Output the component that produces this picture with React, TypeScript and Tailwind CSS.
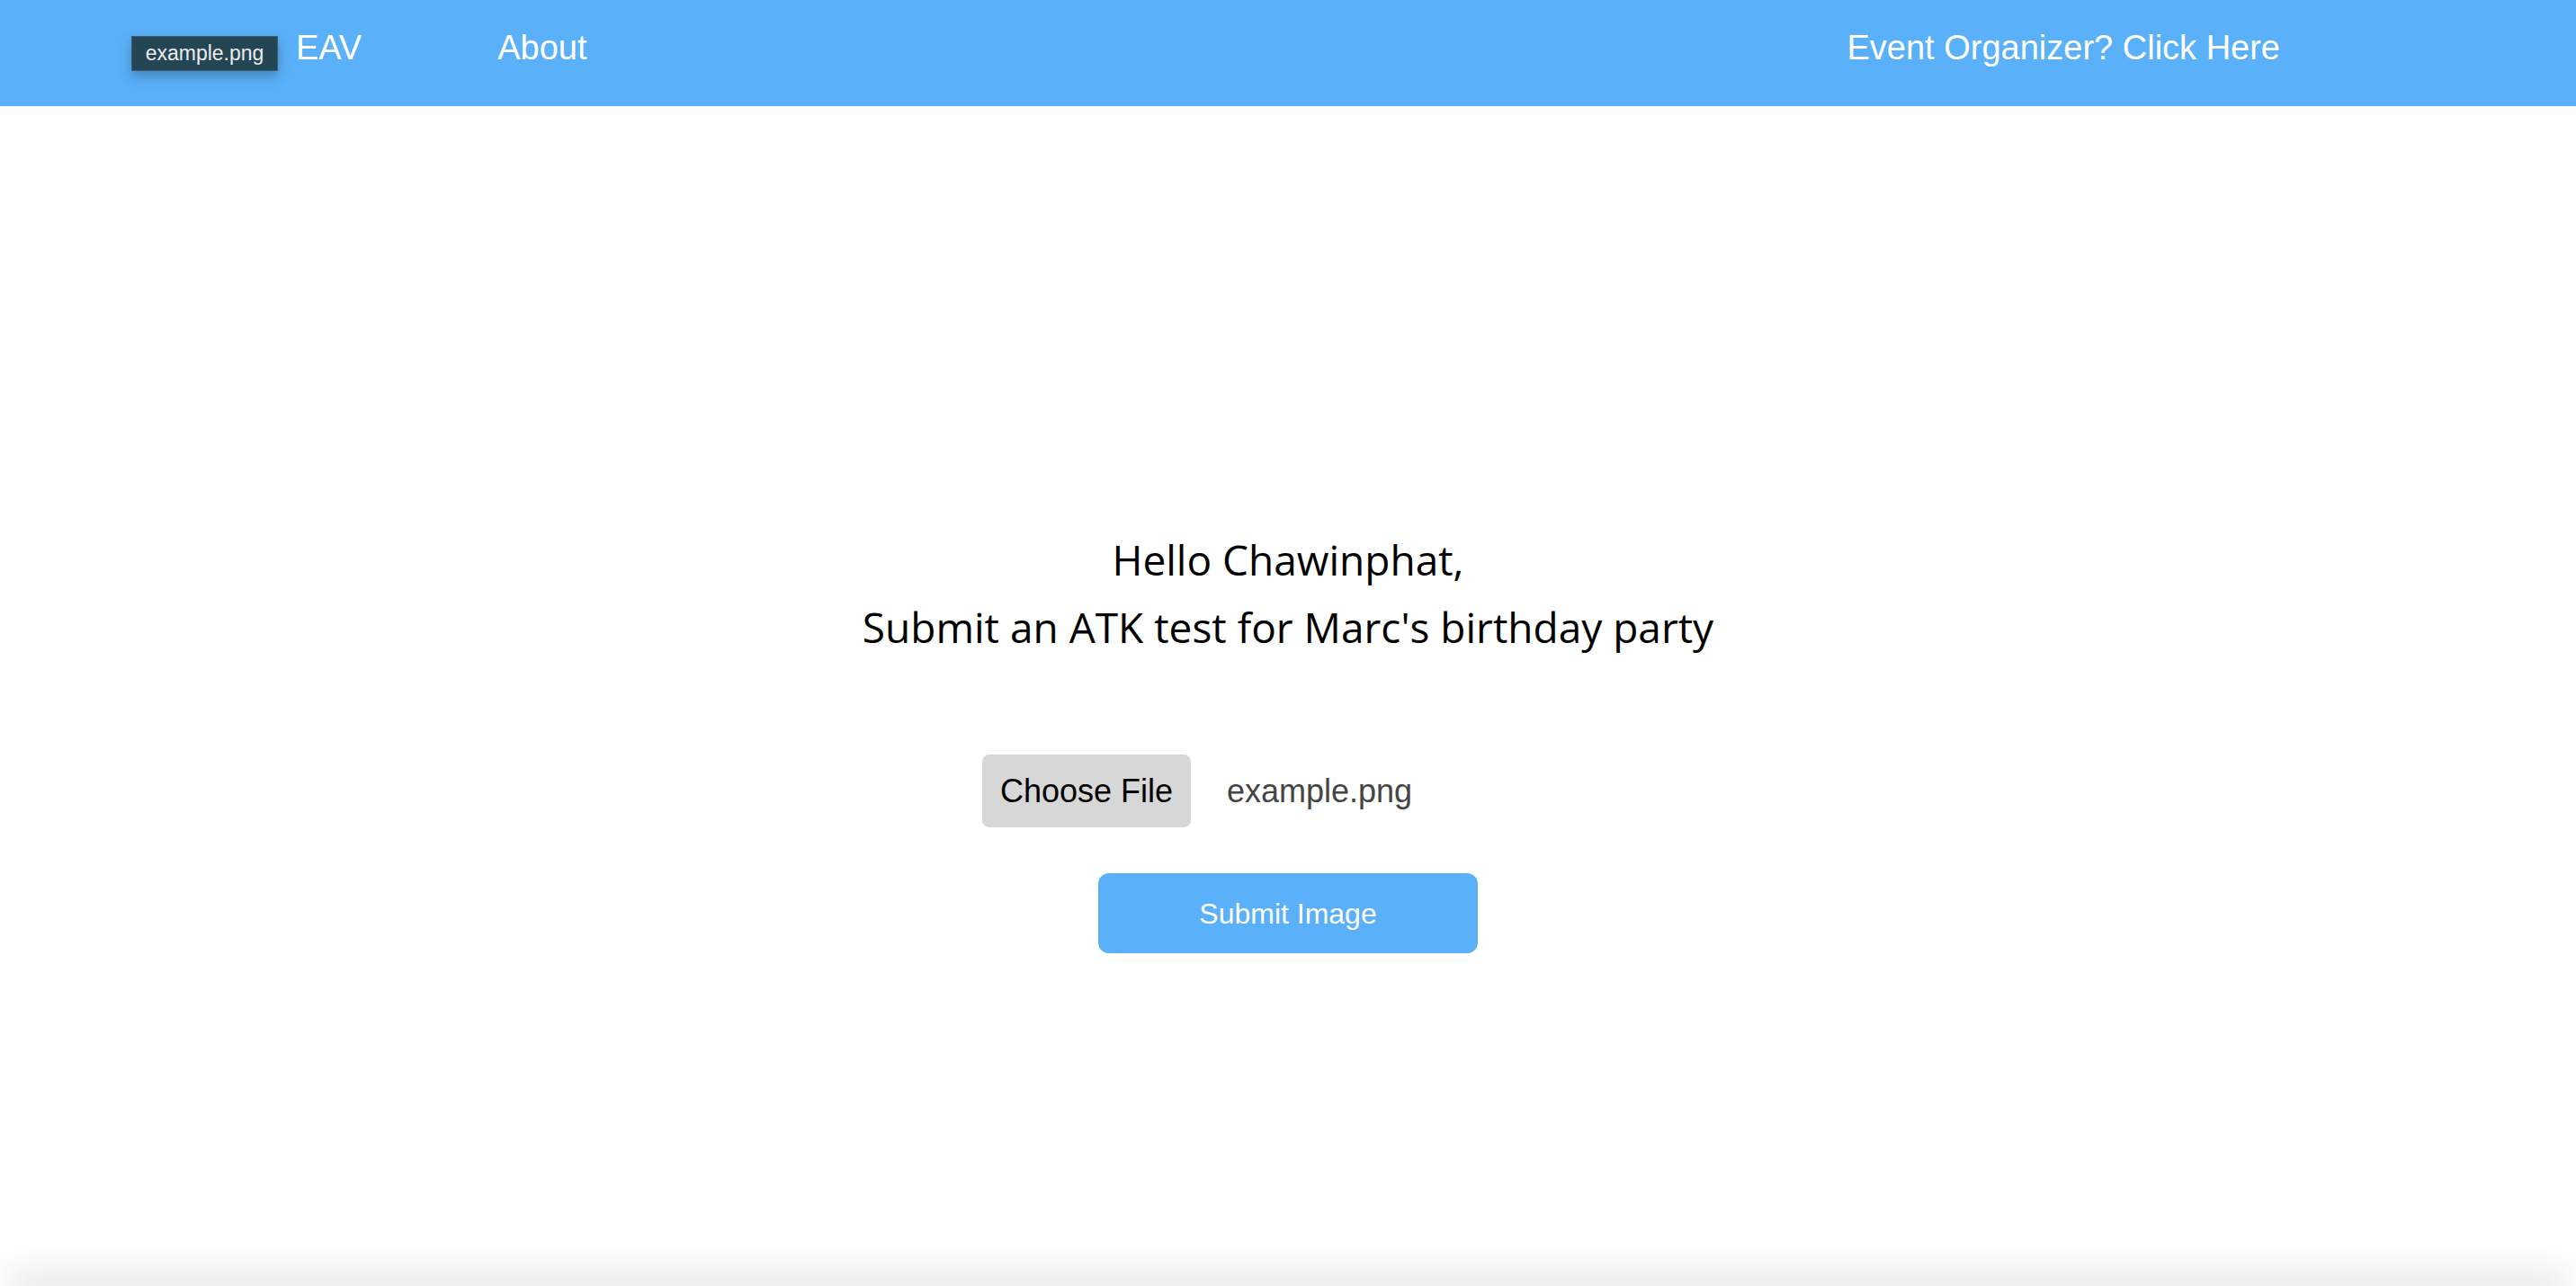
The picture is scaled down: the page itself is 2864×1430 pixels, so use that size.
import { useState } from "react";

const NAV_FONT = { fontFamily: '"Liberation Sans", Arial, Helvetica, sans-serif' };
const HEAD_FONT = { fontFamily: '"Open Sans", "Noto Sans", sans-serif' };

export default function App() {
  const [fileName] = useState("example.png");

  return (
    <div className="relative flex h-screen flex-col overflow-hidden bg-white">
      <header
        className="flex h-[118px] shrink-0 items-center bg-[#5ab0f9] px-[329px] pb-[12px] text-[38px] text-white"
        style={NAV_FONT}
      >
        <a className="leading-[44px]">EAV</a>
        <a className="ml-[151px] leading-[44px]">About</a>
        <a className="ml-auto leading-[44px]">Event Organizer? Click Here</a>
      </header>

      {/* drag preview of the chosen file */}
      <div
        className="absolute left-[146px] top-[40px] flex h-[39px] w-[163px] items-center justify-center border border-[#3a5f6e] bg-[#244654] text-[23px] text-[#ececec] shadow-[0_6px_12px_rgba(0,0,0,0.25)]"
        style={NAV_FONT}
      >
        {fileName}
      </div>

      <main className="flex flex-1 flex-col items-center pt-[467px]">
        <div className="text-center text-[46px] font-normal leading-[75px] text-black" style={HEAD_FONT}>
          <p>Hello Chawinphat,</p>
          <p>Submit an ATK test for Marc's birthday party</p>
        </div>

        <div className="mt-[104px] flex w-[680px] items-center" style={NAV_FONT}>
          <button
            type="button"
            className="flex h-[81px] w-[232px] items-center justify-center rounded-[8px] bg-[#d7d7d7] text-[36px] text-black"
          >
            Choose File
          </button>
          <span className="ml-[40px] text-[36px] text-[#454545]">{fileName}</span>
        </div>

        <button
          type="button"
          className="mt-[51px] flex h-[89px] w-[422px] items-center justify-center rounded-[12px] bg-[#5ab0f9] text-[32px] text-white"
          style={NAV_FONT}
        >
          Submit Image
        </button>
      </main>

      <footer className="mx-[24px] h-0 shrink-0 shadow-[0_0_40px_14px_rgba(0,0,0,0.12)]" />
    </div>
  );
}
